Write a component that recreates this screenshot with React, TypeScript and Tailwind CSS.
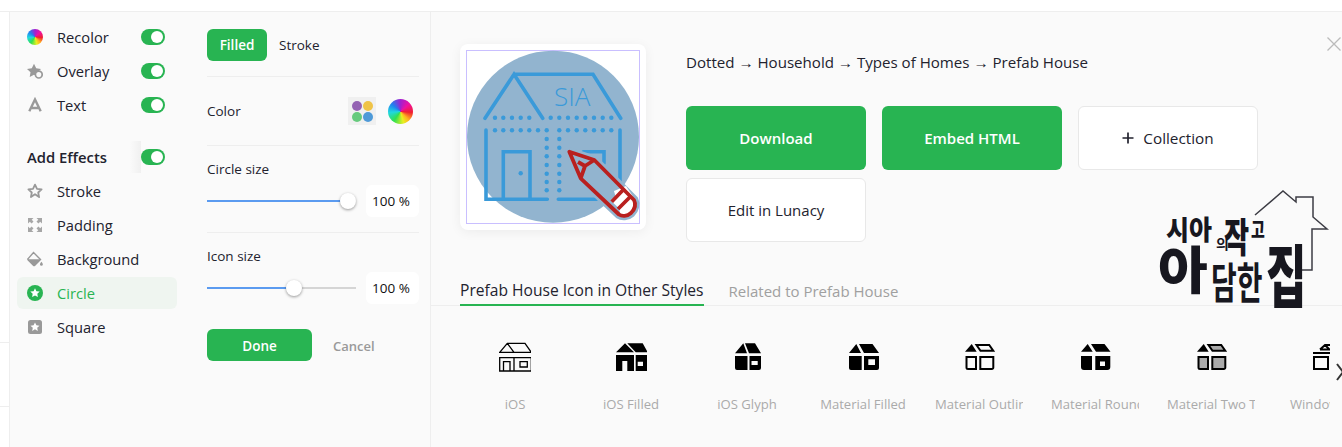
import React from "react";

const STAR = "M8 1.6l2 4.2 4.6.6-3.4 3.1.9 4.6L8 11.2l-4.1 2.9.9-4.6-3.4-3.1 4.6-.6z";

const Toggle = () => (
  <div className="flex h-4 w-6 items-center justify-end rounded-full bg-[#28b452] pr-0.5">
    <div className="h-3 w-3 rounded-full bg-white" />
  </div>
);

const Wheel = ({ className }: { className: string }) => (
  <div
    className={`rounded-full bg-[conic-gradient(#a020d0,#f010a0_50deg,#f02030_95deg,#ffb020_135deg,#e8f020_165deg,#30e050_215deg,#20d8e0_265deg,#2080f0_310deg,#a020d0)] ${className}`}
  />
);

const navIcons: Record<string, React.ReactNode> = {
  Overlay: (
    <svg viewBox="0 0 16 16" className="h-4 w-4">
      <path d="M7 .8l2.200 4.400 4.800.7-3.500 3.300.8 4.800L7 11.700l-4.300 2.300.8-4.800L0 5.900l4.800-.7z" fill="#999" />
      <circle cx="11.800" cy="11.600" r="3.400" fill="#fafafa" stroke="#999" strokeWidth="1.700" />
    </svg>
  ),
  Text: (
    <svg viewBox="0 0 16 16" className="h-4 w-4">
      <path d="M2.300 14.300L8 2.500l5.700 11.800M4.800 11h6.400" fill="none" stroke="#999" strokeWidth="2.400" />
    </svg>
  ),
  Stroke: (
    <svg viewBox="0 0 16 16" className="h-4 w-4">
      <path d={STAR} fill="none" stroke="#999" strokeWidth="1.800" strokeLinejoin="round" />
    </svg>
  ),
  Padding: (
    <svg viewBox="0 0 16 16" className="h-4 w-4">
      <path
        d="M1 1h5.500L4.700 2.800l1.800 1.800-1.900 1.900-1.800-1.800L1 6.500zM15 1v5.500l-1.800-1.800-1.800 1.800-1.900-1.900 1.800-1.800L9.500 1zM1 15V9.500l1.800 1.800 1.800-1.800 1.900 1.900-1.800 1.800L6.500 15zM15 15H9.500l1.800-1.800-1.800-1.800 1.900-1.900 1.800 1.800L15 9.500z"
        fill="#a6a6a6"
      />
    </svg>
  ),
  Background: (
    <svg viewBox="0 0 16 16" className="h-4 w-4">
      <path d="M6.500 1.500L13.500 8.500L7.800 14.200a1 1 0 0 1-1.400 0L1.200 9a1 1 0 0 1 0-1.400z" fill="none" stroke="#999" strokeWidth="1.400" />
      <path d="M1 8.200H13.600L7.600 14.400a1 1 0 0 1-1.300 0z" fill="#999" />
      <path d="M14.400 10.800c.9 1.200 1.400 2 1.400 2.600a1.400 1.400 0 0 1-2.800 0c0-.6.500-1.400 1.400-2.600z" fill="#999" />
    </svg>
  ),
  Circle: (
    <svg viewBox="0 0 16 16" className="h-4 w-4">
      <circle cx="8" cy="8" r="8" fill="#28b452" />
      <path d="M8 3.200l1.400 3 3.300.4-2.400 2.200.6 3.200L8 10.400 5.100 12l.6-3.200-2.400-2.200 3.300-.4z" fill="#fff" />
    </svg>
  ),
  Square: (
    <svg viewBox="0 0 16 16" className="h-4 w-4">
      <rect x="1" y="1" width="14" height="14" rx="2.500" fill="#999" />
      <path d="M8 3.400l1.400 2.900 3.100.4-2.300 2.100.6 3.100L8 10.300l-2.800 1.600.6-3.100-2.300-2.100 3.100-.4z" fill="#fff" />
    </svg>
  ),
};

const NavRow = ({ label, active, toggle }: { label: string; active?: boolean; toggle?: boolean }) => (
  <div className={`flex h-8 items-center rounded-md pl-2.5 pr-3 ${active ? "bg-[#eff5f0]" : ""}`}>
    <div className="w-[30px]">
      {label === "Recolor" ? <Wheel className="h-4 w-4" /> : navIcons[label]}
    </div>
    <span className={`pt-px text-[14.7px] ${active ? "text-[#28b452]" : "text-[#22222e]"}`}>{label}</span>
    {toggle && (
      <div className="ml-auto">
        <Toggle />
      </div>
    )}
  </div>
);

const SliderRow = ({ percent }: { percent: number }) => (
  <div className="mt-1.5 flex h-8 items-center justify-between">
    <div className="relative h-0.5 w-[149px] bg-[#d5d5d5]">
      <div className="h-full bg-[#5b9bf0]" style={{ width: `${percent}%` }} />
      <div
        className="absolute top-[-7px] ml-[-8px] h-4 w-4 rounded-full bg-white shadow-[0_1px_3px_rgba(0,0,0,0.4)]"
        style={{ left: `${percent}%` }}
      />
    </div>
    <div className="flex h-8 w-[53px] items-center rounded-md bg-white pl-1.5 text-[13.5px] text-[#111]">100 %</div>
  </div>
);

const K = "#000";
const styles: { label: string; icon: React.ReactNode }[] = [
  {
    label: "iOS",
    icon: (
      <g fill="none" stroke={K} strokeWidth="1.300">
        <path d="M.7 10.300L8.300 1.300H26l6.300 9zM8.300 1.300L15 10.300" />
        <path d="M.7 15.700h31.600V29H.7zM15 15.700V29M4.500 29v-9.300h6.500V29M21 19.700h7.300v5.300H21z" />
      </g>
    ),
  },
  {
    label: "iOS Filled",
    icon: (
      <g fill={K}>
        <path d="M1 10.300L10 1.300l9 9zM12.300 1.300h15.400l5 9h-12z" />
        <path fillRule="evenodd" d="M1 13h18v16h-6.700V19H7.300v10H1zM20.700 13h12v16h-12zM22.700 19.700v4.300h5.300v-4.300z" />
      </g>
    ),
  },
  {
    label: "iOS Glyph",
    icon: (
      <g fill={K}>
        <path d="M4 11.300l8.300-10L16 11.300zM14 1.300h10l6 10H18z" />
        <path fillRule="evenodd" d="M4 14h12.500v14H6a2 2 0 0 1-2-2zM18.500 14H30v12a2 2 0 0 1-2 2h-9.500zM20.500 19v4h6.200v-4z" />
      </g>
    ),
  },
  {
    label: "Material Filled",
    icon: (
      <g fill={K}>
        <path d="M2 11l7.300-9L14 11zM12 2h13.500L32 11H17z" />
        <path fillRule="evenodd" d="M2 14h12.700v14H4a2 2 0 0 1-2-2zM17 14h15v12a2 2 0 0 1-2 2H17zM21.300 17.300V23H28v-5.700z" />
      </g>
    ),
  },
  {
    label: "Material Outlined",
    icon: (
      <g>
        <path d="M2 9.700L8.700 2l5 7.700z" fill={K} />
        <path d="M13.500 3h12.700l4 5.700H17.500z" fill="none" stroke={K} strokeWidth="2" />
        <path d="M3.500 15h9.500v12H5a1.500 1.500 0 0 1-1.500-1.500zM17.300 15h13v10.500a1.500 1.500 0 0 1-1.500 1.500H17.300z" fill="none" stroke={K} strokeWidth="2" />
      </g>
    ),
  },
  {
    label: "Material Rounded",
    icon: (
      <g fill={K}>
        <path d="M2 9.700L8.700 2l5 7.700zM12 2h13.500L31.500 9.700H17z" />
        <path fillRule="evenodd" d="M2 14h11v14H5a3 3 0 0 1-3-3zM16.300 14h15v11a3 3 0 0 1-3 3h-12zM21 19.500V24h5v-4.500z" />
      </g>
    ),
  },
  {
    label: "Material Two Tone",
    icon: (
      <g>
        <path d="M2 9.700L8.700 2l5 7.700z" fill={K} />
        <path d="M13.500 3h12.700l4 5.700H17.500z" fill="#aaa" stroke={K} strokeWidth="2" />
        <path d="M3.500 15h9.500v12H5a1.500 1.500 0 0 1-1.500-1.500zM17.300 15h13v10.500a1.500 1.500 0 0 1-1.500 1.500H17.300z" fill="#aaa" stroke={K} strokeWidth="2" />
      </g>
    ),
  },
  {
    label: "Windows 10",
    icon: (
      <g fill="none" stroke={K} strokeWidth="2">
        <path d="M2 11h26M9 7.500h19M9 7.500l5-4.500h14M14 3l4 4" />
        <path d="M3 15h14v12H3zM21 15h10v12H21z" />
      </g>
    ),
  },
];

const dotsTop = [35, 43.300, 52, 60.700, 69.300, 90.700, 99.300, 108, 116.700, 125.300, 134, 142.700, 151.300];
const dotsMid = [35, 43.300, 52, 60.700, 69.300, 78, 86.700, 99.300, 108, 116.700, 125.300, 134, 142.700, 151.300];
const dotsCol = [95, 103.700, 112.300, 121, 129.700, 138, 146.300];

const PreviewIcon = () => (
  <svg viewBox="0 0 186 186" className="h-[186px] w-[186px]">
    <rect x="6.500" y="6.500" width="173" height="173" fill="#fff" stroke="#c9bfff" />
    <circle cx="93" cy="92.700" r="86" fill="#92b4cf" />
    <g fill="none" stroke="#3a9ad9" strokeWidth="3.600" strokeLinecap="round">
      <path d="M25 74.300L54 30.300L82.700 74.300M54 30.300H133L160.700 74.300" />
      <path d="M26 86V155.300H87.300M98.300 155.300H136.700M160 86V137" />
      <path d="M43.300 155.300V107.700H70V155.300" />
      <path d="M123.300 107.700H144V119.300" />
    </g>
    <g fill="#3a9ad9">
      {dotsTop.map((x) => (
        <circle key={x} cx={x} cy="73.700" r="2.200" />
      ))}
      {dotsMid.map((x) => (
        <circle key={x} cx={x} cy="86.300" r="2.200" />
      ))}
      {dotsCol.map((y) => (
        <circle key={y} cx="86.700" cy={y} r="2.200" />
      ))}
      {dotsCol.map((y) => (
        <circle key={y} cx="99.300" cy={y} r="2.200" />
      ))}
      <circle cx="60.700" cy="129.300" r="2.200" />
      <text x="94" y="61.500" fontFamily="'Open Sans', sans-serif" fontSize="26" fontWeight="300">
        SIA
      </text>
    </g>
    <path
      d="M109.300 107.700L134.300 116L174 156C176 160 175 165 171 169C167 172.500 162 172.500 159 170.500L120.700 134.300Z"
      fill="none"
      stroke="#92b4cf"
      strokeWidth="9"
      strokeLinejoin="round"
    />
    <path d="M154 147L166 142L176 157C177 163 169 173 161 172Z" fill="#fff" />
    <path
      d="M109.300 107.700L134.300 116L174 156C176 160 175 165 171 169C167 172.500 162 172.500 159 170.500L120.700 134.300ZM134.300 116L125 122L120.700 134.300M125 122L118 118"
      fill="none"
      stroke="#b9201f"
      strokeWidth="3.800"
      strokeLinejoin="round"
    />
    <path d="M164 145L151.700 157.700M170.500 152.500L158 165" stroke="#b9201f" strokeWidth="3.800" />
  </svg>
);

const cjk = "'Noto Sans CJK KR', sans-serif";

const Logo = () => (
  <svg viewBox="1150 185 192 130" className="absolute left-[719px] top-[173px] h-[130px] w-[192px]">
    <path
      d="M1255 215L1283 191L1296 202V197H1313V217L1327 229H1312V270H1300"
      fill="none"
      stroke="#3c3c44"
      strokeWidth="1.500"
    />
    <g fill="#17171f" fontFamily={cjk} fontWeight="900">
      <text transform="translate(1166 240) scale(1 1.100)" fontSize="25">시아</text>
      <text transform="translate(1216 249)" fontSize="14" fontWeight="700">의</text>
      <text transform="translate(1224 252) scale(1.050 1.550)" fontSize="26">작</text>
      <text transform="translate(1251 237) scale(1 1.400)" fontSize="15">고</text>
      <text transform="translate(1158 289) scale(1 .950)" fontSize="54">아</text>
      <text transform="translate(1211 299) scale(1 1.550)" fontSize="28" fontWeight="700">담한</text>
      <text transform="translate(1266 302) scale(1 1.550)" fontSize="44">집</text>
    </g>
  </svg>
);

export default function App() {
  return (
    <div className="flex h-[447px] w-[1342px] flex-col overflow-hidden bg-white font-['Open_Sans',sans-serif] text-[#22222e]">
      <div className="h-3 shrink-0 border-b border-[#eeeeee]" />
      <div className="flex min-h-0 flex-1">
        <div className="w-2.5 shrink-0 border-r border-[#eeeeee]">
          <div className="h-[331px] border-b border-[#eeeeee]" />
          <div className="h-[64px] border-b border-[#eeeeee]" />
        </div>

        <div className="flex flex-1 bg-[#fafafa]">
          <div className="w-[197px] shrink-0 pl-[7px] pt-[9px]">
            <div className="flex w-40 flex-col gap-0.5">
              <NavRow label="Recolor" toggle />
              <NavRow label="Overlay" toggle />
              <NavRow label="Text" toggle />
              <div className="mt-[18px] flex h-8 items-center pl-2.5 pr-3">
                <span className="text-[14.8px] font-semibold">Add Effects</span>
                <div className="ml-auto h-8 w-[11px] bg-gradient-to-r from-[#fafafa] to-[#f0f0f0]" />
                <Toggle />
              </div>
              <NavRow label="Stroke" />
              <NavRow label="Padding" />
              <NavRow label="Background" />
              <NavRow label="Circle" active />
              <NavRow label="Square" />
            </div>
          </div>

          <div className="mr-[11px] w-[212px] shrink-0 pt-[17px] text-[13.5px]">
            <div className="flex items-center gap-3 border-b border-[#eeeeee] pb-[15px]">
              <div className="flex h-8 w-[60px] items-center justify-center rounded-md bg-[#28b452] pt-px font-semibold text-white">
                Filled
              </div>
              <span className="font-medium">Stroke</span>
            </div>
            <div className="flex h-[69px] items-center border-b border-[#eeeeee] font-medium">
              <span>Color</span>
              <div className="ml-auto mr-3 grid h-7 w-7 grid-cols-2 place-items-center bg-[#f0f0f0] p-[3px]">
                <div className="h-2.5 w-2.5 rounded-full bg-[#9463b3]" />
                <div className="h-2.5 w-2.5 rounded-full bg-[#efc347]" />
                <div className="h-2.5 w-2.5 rounded-full bg-[#66ca7d]" />
                <div className="h-2.5 w-2.5 rounded-full bg-[#4e9ad8]" />
              </div>
              <Wheel className="mr-[6px] h-[25px] w-[25px]" />
            </div>
            <div className="border-b border-[#eeeeee] pb-[15px] pt-[13px]">
              <div className="h-5 font-medium leading-5">Circle size</div>
              <SliderRow percent={94.500} />
            </div>
            <div className="pt-[13px]">
              <div className="h-5 font-medium leading-5">Icon size</div>
              <SliderRow percent={58.500} />
            </div>
            <div className="mt-[25px] flex items-center">
              <div className="flex h-8 w-[105px] items-center justify-center rounded-md bg-[#28b452] pt-[3px] font-semibold text-white">
                Done
              </div>
              <span className="ml-[21px] pt-[3px] text-[13px] font-semibold text-[#999]">Cancel</span>
            </div>
          </div>

          <div className="relative min-w-0 flex-1 border-l border-[#eeeeee]">
            <div className="flex gap-10 pl-[29px] pt-8">
              <div className="h-[186px] w-[186px] shrink-0 overflow-hidden rounded-lg bg-white shadow-[0_2px_12px_rgba(0,0,0,0.06)]">
                <PreviewIcon />
              </div>
              <div className="w-[590px] shrink-0">
                <div className="mt-[7px] h-[23px] text-[15.1px] font-medium leading-[22px]">
                  Dotted → Household → Types of Homes → Prefab House
                </div>
                <div className="mt-8 flex flex-wrap gap-x-4 gap-y-2 text-[15px]">
                  <div className="flex h-16 w-[180px] items-center justify-center rounded-md bg-[#28b452] font-semibold text-white">
                    Download
                  </div>
                  <div className="flex h-16 w-[180px] items-center justify-center rounded-md bg-[#28b452] font-semibold text-white">
                    Embed HTML
                  </div>
                  <div className="flex h-16 w-[180px] items-center justify-center rounded-md border border-[#e8e8e8] bg-white text-[15.3px] font-medium">
                    <svg viewBox="0 0 12 12" className="mr-[9px] h-3 w-3">
                      <path d="M6 .5v11M.5 6h11" stroke="#22222e" strokeWidth="1.700" />
                    </svg>
                    Collection
                  </div>
                  <div className="flex h-16 w-[180px] items-center justify-center rounded-md border border-[#e8e8e8] bg-white font-medium">
                    Edit in Lunacy
                  </div>
                </div>
              </div>
            </div>

            <div className="mt-[38px] flex items-end gap-[25px] border-b border-[#eeeeee] pl-[29px] text-[15px]">
              <div className="-mb-px border-b-2 border-[#28b452] pb-[3px] text-[15.6px] font-medium leading-[21px]">
                Prefab House Icon in Other Styles
              </div>
              <div className="pb-[3px] leading-[21px] text-[#a0a0a0]">Related to Prefab House</div>
            </div>

            <div className="flex w-[899px] overflow-hidden pl-[26px] pt-9">
              {styles.map((s) => (
                <div key={s.label} className="flex w-[116px] shrink-0 flex-col items-center">
                  <svg viewBox="0 0 32 32" className="h-8 w-8">
                    {s.icon}
                  </svg>
                  <div className="mt-[21px] w-[88px] overflow-hidden whitespace-nowrap text-center text-[13.1px] leading-[18px] text-[#aaaaaa]">
                    {s.label}
                  </div>
                </div>
              ))}
            </div>

            <Logo />
            <svg viewBox="0 0 14 14" className="absolute right-px top-[25px] h-[14px] w-[14px]">
              <path d="M.5.5l13 13M13.500.5l-13 13" stroke="#bbb" strokeWidth="1.300" />
            </svg>
            <svg viewBox="0 0 8 18" className="absolute right-[-2px] top-[351px] h-[18px] w-2">
              <path d="M1 1l6 8-6 8" fill="none" stroke="#333" strokeWidth="2" />
            </svg>
          </div>
        </div>
      </div>
    </div>
  );
}
